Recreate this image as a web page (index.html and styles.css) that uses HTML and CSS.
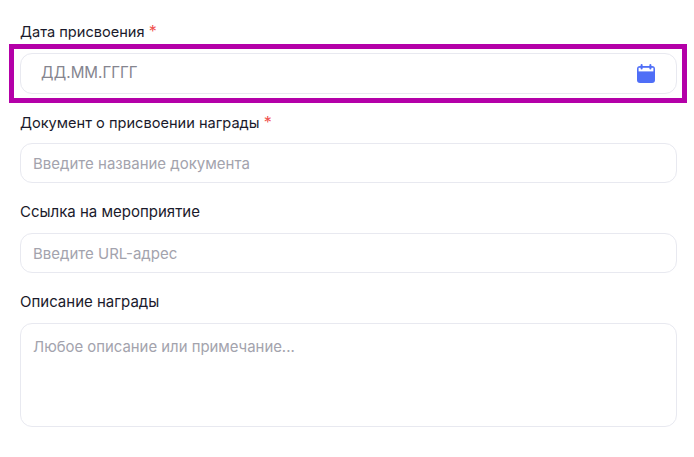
FILE: index.html
```html
<!DOCTYPE html>
<html lang="ru">
<head>
    <meta charset="UTF-8">
    <meta name="viewport" content="width=device-width, initial-scale=1.0">
    <title>Награда</title>
    <link rel="stylesheet" href="styles.css">
</head>
<body>
    <form class="award-form">
        <div class="field field-date">
            <label class="field-label" for="date">Дата присвоения <span class="required">*</span></label>
            <div class="highlight">
                <div class="date-box">
                    <input class="date-input" id="date" type="text" placeholder="ДД.ММ.ГГГГ">
                    <svg class="date-icon" width="18" height="20" viewBox="0 0 18 20" aria-hidden="true">
                        <path fill="#4f6ef7" d="M3 3h12a3 3 0 0 1 3 3v11a3 3 0 0 1-3 3H3a3 3 0 0 1-3-3V6a3 3 0 0 1 3-3z"/>
                        <rect x="1.6" y="4.8" width="14.8" height="3.6" fill="#fff"/>
                        <rect x="3.6" y="1" width="2" height="5.4" rx="1" fill="#4f6ef7"/>
                        <rect x="12.4" y="1" width="2" height="5.4" rx="1" fill="#4f6ef7"/>
                    </svg>
                </div>
            </div>
        </div>
        <div class="field field-doc">
            <label class="field-label" for="doc">Документ о присвоении награды <span class="required">*</span></label>
            <input class="text-input" id="doc" type="text" placeholder="Введите название документа">
        </div>
        <div class="field">
            <label class="field-label field-label-wide" for="url">Ссылка на мероприятие</label>
            <input class="text-input" id="url" type="text" placeholder="Введите URL-адрес">
        </div>
        <div class="field">
            <label class="field-label field-label-wide" for="descr">Описание награды</label>
            <textarea class="text-area" id="descr" placeholder="Любое описание или примечание..."></textarea>
        </div>
    </form>
</body>
</html>
```

FILE: styles.css
```css
* {
    box-sizing: border-box;
}
body {
    font-family: Inter, "Liberation Sans", sans-serif;
    background-color: #ffffff;
    color: #1a1a2b;
    margin: 0;
    padding: 0;
}
.award-form {
    padding: 20px 17px 0 20px;
    display: flex;
    flex-direction: column;
    gap: 18px;
}
.field {
    display: flex;
    flex-direction: column;
    gap: 10px;
}
.field-date {
    gap: 2px;
}
.field-doc {
    margin-top: -10px;
}
.field-label {
    font-size: 14.6px;
    line-height: 22px;
    height: 22px;
}
.field-label-wide {
    font-size: 15px;
}
.required {
    color: #f0524f;
    font-size: 16px;
}
.highlight {
    margin: 0 -10px 0 -11px;
    border: 5px solid #b400a8;
    padding: 4px 5px 4px 6px;
}
.date-box {
    height: 41px;
    border: 1px solid #e8e9f0;
    border-radius: 12px;
    display: flex;
    align-items: center;
    padding: 0 21px 0 20px;
}
.date-input {
    flex: 1;
    border: none;
    outline: none;
    padding: 0;
    margin-bottom: 3px;
    font: 15.2px Inter, "Liberation Sans", sans-serif;
}
.date-input::placeholder {
    color: #85858f;
}
.date-icon {
    flex: none;
    margin-bottom: 2px;
}
.text-input,
.text-area {
    display: block;
    width: 100%;
    border: 1px solid #e8e9f0;
    border-radius: 12px;
    outline: none;
    padding: 0 12px;
    font: 15px Inter, "Liberation Sans", sans-serif;
}
.text-input {
    height: 40px;
}
.text-area {
    height: 104px;
    padding-top: 14px;
    font-size: 14.9px;
    resize: none;
}
.text-input::placeholder,
.text-area::placeholder {
    color: #a3a3ad;
}
```
